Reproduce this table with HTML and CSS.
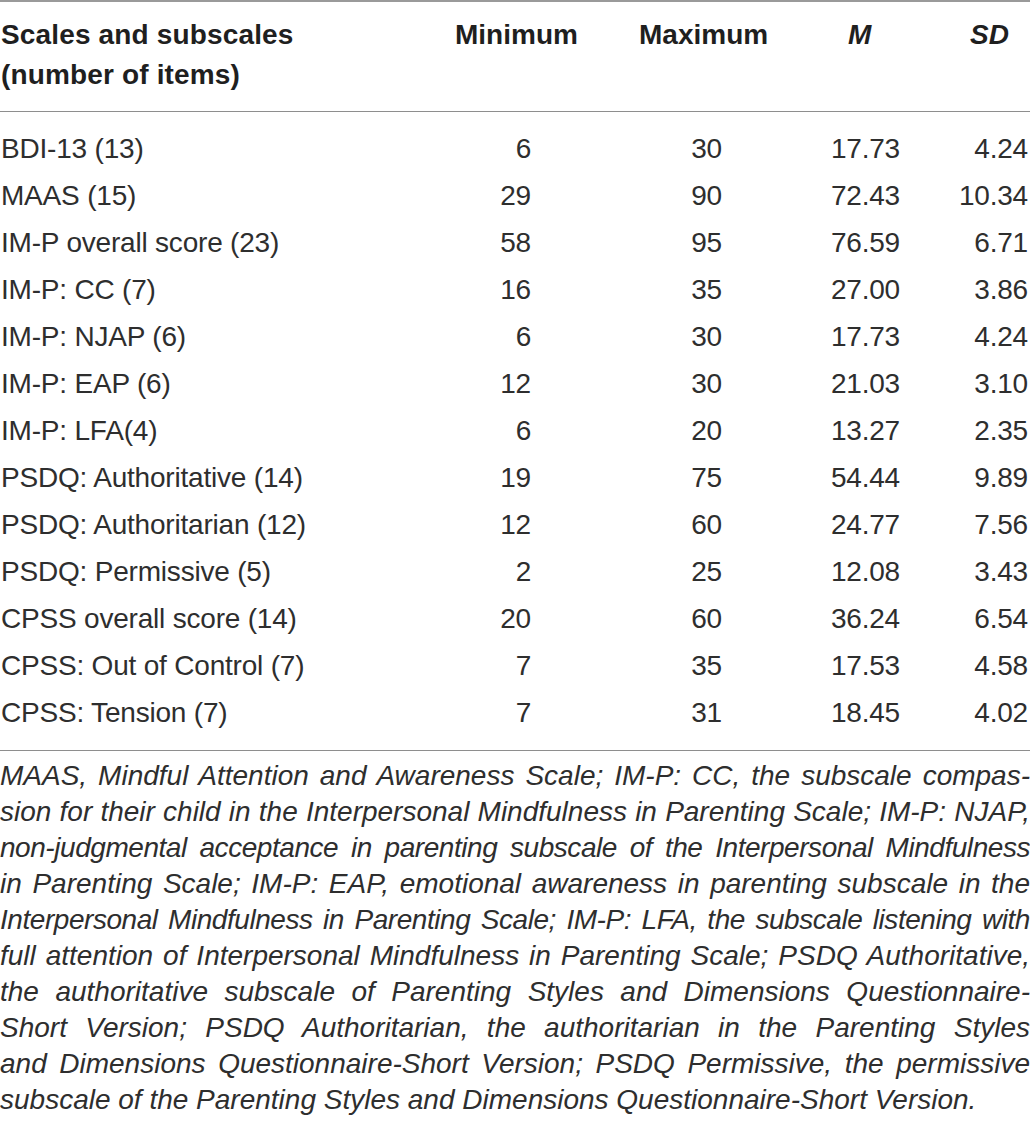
FILE: index.html
```html
<!DOCTYPE html>
<html lang="en">
<head>
<meta charset="utf-8">
<title>Descriptive statistics</title>
<link rel="stylesheet" href="styles.css">
</head>
<body>
<div class="wrap">
  <table class="stats">
    <colgroup>
      <col class="c-label">
      <col class="c-min">
      <col class="c-max">
      <col class="c-m">
      <col class="c-sd">
    </colgroup>
    <thead>
      <tr>
        <th class="h-label">Scales and subscales<br>(number of items)</th>
        <th class="h-min">Minimum</th>
        <th class="h-max">Maximum</th>
        <th class="h-m"><i>M</i></th>
        <th class="h-sd"><i>SD</i></th>
      </tr>
    </thead>
    <tbody>
      <tr><td>BDI-13 (13)</td><td class="v-min">6</td><td class="v-max">30</td><td class="v-m">17.73</td><td class="v-sd">4.24</td></tr>
      <tr><td>MAAS (15)</td><td class="v-min">29</td><td class="v-max">90</td><td class="v-m">72.43</td><td class="v-sd">10.34</td></tr>
      <tr><td>IM-P overall score (23)</td><td class="v-min">58</td><td class="v-max">95</td><td class="v-m">76.59</td><td class="v-sd">6.71</td></tr>
      <tr><td>IM-P: CC (7)</td><td class="v-min">16</td><td class="v-max">35</td><td class="v-m">27.00</td><td class="v-sd">3.86</td></tr>
      <tr><td>IM-P: NJAP (6)</td><td class="v-min">6</td><td class="v-max">30</td><td class="v-m">17.73</td><td class="v-sd">4.24</td></tr>
      <tr><td>IM-P: EAP (6)</td><td class="v-min">12</td><td class="v-max">30</td><td class="v-m">21.03</td><td class="v-sd">3.10</td></tr>
      <tr><td>IM-P: LFA(4)</td><td class="v-min">6</td><td class="v-max">20</td><td class="v-m">13.27</td><td class="v-sd">2.35</td></tr>
      <tr><td>PSDQ: Authoritative (14)</td><td class="v-min">19</td><td class="v-max">75</td><td class="v-m">54.44</td><td class="v-sd">9.89</td></tr>
      <tr><td>PSDQ: Authoritarian (12)</td><td class="v-min">12</td><td class="v-max">60</td><td class="v-m">24.77</td><td class="v-sd">7.56</td></tr>
      <tr><td>PSDQ: Permissive (5)</td><td class="v-min">2</td><td class="v-max">25</td><td class="v-m">12.08</td><td class="v-sd">3.43</td></tr>
      <tr><td>CPSS overall score (14)</td><td class="v-min">20</td><td class="v-max">60</td><td class="v-m">36.24</td><td class="v-sd">6.54</td></tr>
      <tr><td>CPSS: Out of Control (7)</td><td class="v-min">7</td><td class="v-max">35</td><td class="v-m">17.53</td><td class="v-sd">4.58</td></tr>
      <tr><td>CPSS: Tension (7)</td><td class="v-min">7</td><td class="v-max">31</td><td class="v-m">18.45</td><td class="v-sd">4.02</td></tr>
    </tbody>
  </table>
  <p class="note">
    <span class="ln">MAAS, Mindful Attention and Awareness Scale; IM-P: CC, the subscale compas-</span>
    <span class="ln">sion for their child in the Interpersonal Mindfulness in Parenting Scale; IM-P: NJAP,</span>
    <span class="ln tight">non-judgmental acceptance in parenting subscale of the Interpersonal Mindfulness</span>
    <span class="ln">in Parenting Scale; IM-P: EAP, emotional awareness in parenting subscale in the</span>
    <span class="ln tight">Interpersonal Mindfulness in Parenting Scale; IM-P: LFA, the subscale listening with</span>
    <span class="ln">full attention of Interpersonal Mindfulness in Parenting Scale; PSDQ Authoritative,</span>
    <span class="ln">the authoritative subscale of Parenting Styles and Dimensions Questionnaire-</span>
    <span class="ln">Short Version; PSDQ Authoritarian, the authoritarian in the Parenting Styles</span>
    <span class="ln">and Dimensions Questionnaire-Short Version; PSDQ Permissive, the permissive</span>
    <span class="ln last">subscale of the Parenting Styles and Dimensions Questionnaire-Short Version.</span>
  </p>
</div>
</body>
</html>
```

FILE: styles.css
```css
html, body {
  margin: 0;
  padding: 0;
  background: #ffffff;
}

.wrap {
  width: 1030px;
  font-family: "Liberation Sans", Arial, Helvetica, sans-serif;
  color: #2e2e2e;
}

.stats {
  width: 1030px;
  table-layout: fixed;
  border-collapse: collapse;
  border-top: 2px solid #9a9a9a;
  border-bottom: 1px solid #8e8e8e;
}

.c-label { width: 440px; }
.c-min { width: 170px; }
.c-max { width: 190px; }
.c-m { width: 135px; }
.c-sd { width: 95px; }

.stats thead tr {
  border-bottom: 1px solid #8e8e8e;
}

.stats th {
  font-size: 28px;
  font-weight: bold;
  line-height: 40px;
  color: #1f1f1f;
  text-align: left;
  vertical-align: top;
  padding: 13px 0 16px 0;
  white-space: nowrap;
}

.stats th.h-label { padding-left: 1px; letter-spacing: 0.15px; }
.stats th.h-min { padding-left: 15px; }
.stats th.h-max { padding-left: 29px; }
.stats th.h-m { padding-left: 48px; }
.stats th.h-sd { padding-left: 35px; }

.stats td {
  font-size: 28px;
  line-height: 47px;
  padding: 0;
  white-space: nowrap;
  letter-spacing: -0.2px;
}

.stats tbody tr:first-child td { padding-top: 13px; }
.stats tbody tr:last-child td { padding-bottom: 14px; }

.stats td:first-child { padding-left: 1px; }

.stats td.v-min { text-align: right; padding-right: 79px; }
.stats td.v-max { text-align: right; padding-right: 78px; }
.stats td.v-m { text-align: right; padding-right: 35px; }
.stats td.v-sd { text-align: right; padding-right: 2px; }

.note {
  margin: 0;
  padding-top: 7px;
  font-size: 28px;
  font-style: italic;
  line-height: 36px;
  color: #2e2e2e;
}

.note .ln {
  display: block;
  white-space: nowrap;
  text-align: justify;
  text-align-last: justify;
}

.note .ln.tight {
  letter-spacing: -0.45px;
  word-spacing: -1px;
}

.note .ln.last {
  text-align: left;
  text-align-last: left;
}
```
